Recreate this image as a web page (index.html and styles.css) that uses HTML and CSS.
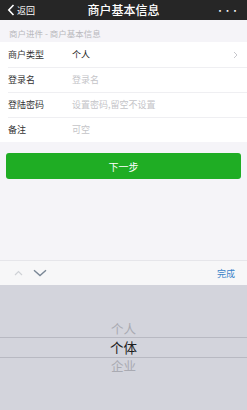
FILE: index.html
```html
<!DOCTYPE html>
<html lang="zh-CN">
<head>
    <meta charset="UTF-8">
    <meta name="viewport" content="width=device-width, initial-scale=1.0">
    <title>商户基本信息</title>
    <link rel="stylesheet" href="styles.css">
</head>
<body>
    <div class="navbar">
        <div class="nav-back">
            <svg width="8" height="12" viewBox="0 0 8 12"><path d="M6.5 1 L1.8 6 L6.5 11" fill="none" stroke="#fff" stroke-width="1.6"/></svg>
            <span>返回</span>
        </div>
        <div class="nav-title">商户基本信息</div>
        <div class="nav-more">•••</div>
    </div>

    <div class="crumb">商户进件 - 商户基本信息</div>

    <div class="form">
        <div class="row">
            <div class="label">商户类型</div>
            <div class="value">个人</div>
            <svg class="arrow" width="5" height="8" viewBox="0 0 5 8"><path d="M1 1 L4 4 L1 7" fill="none" stroke="#c7c7cc" stroke-width="1"/></svg>
        </div>
        <div class="row">
            <div class="label">登录名</div>
            <div class="value holder">登录名</div>
        </div>
        <div class="row">
            <div class="label">登陆密码</div>
            <div class="value holder">设置密码,留空不设置</div>
        </div>
        <div class="row">
            <div class="label">备注</div>
            <div class="value holder">可空</div>
        </div>
    </div>

    <div class="btn-wrap">
        <div class="btn">下一步</div>
    </div>

    <div class="spacer"></div>

    <div class="toolbar">
        <div class="tb-arrows">
            <svg width="9" height="6" viewBox="0 0 9 6"><path d="M1 5 L4.5 1.5 L8 5" fill="none" stroke="#cfd2d6" stroke-width="1.2"/></svg>
            <svg width="14" height="8" viewBox="0 0 14 8"><path d="M1 1.2 L7 6.5 L13 1.2" fill="none" stroke="#7a8796" stroke-width="1.4"/></svg>
        </div>
        <div class="tb-done">完成</div>
    </div>

    <div class="picker">
        <div class="opt">个人</div>
        <div class="opt selected">个体</div>
        <div class="opt">企业</div>
    </div>
</body>
</html>
```

FILE: styles.css
```css
html, body{
    margin: 0;
    padding: 0;
}
body{
    width: 247px;
    height: 410px;
    display: flex;
    flex-direction: column;
    background-color: #f5f4f8;
    font-family: "Noto Sans CJK SC", "Liberation Sans", sans-serif;
    overflow: hidden;
}
.navbar{
    height: 20px;
    background-color: #262626;
    display: flex;
    align-items: center;
    justify-content: space-between;
    padding: 0 8px 0 7px;
    color: #fff;
    position: relative;
}
.nav-back{
    display: flex;
    align-items: center;
    gap: 2px;
    font-size: 9px;
}
.nav-title{
    position: absolute;
    left: 0;
    right: 0;
    text-align: center;
    font-size: 12px;
    font-weight: 500;
    line-height: 20px;
    pointer-events: none;
}
.nav-more{
    font-size: 7px;
    font-weight: bold;
    letter-spacing: 0.5px;
}
.crumb{
    height: 22px;
    line-height: 26px;
    padding-left: 9px;
    font-size: 8.5px;
    color: #b9b9bd;
}
.form{
    background-color: #fff;
}
.row{
    height: 25px;
    display: flex;
    align-items: center;
    padding: 0 9px 0 8px;
    position: relative;
    font-size: 9px;
}
.row + .row::before{
    content: "";
    position: absolute;
    top: 0;
    left: 8px;
    right: 0;
    border-top: 1px solid #efeff2;
}
.label{
    width: 64px;
    color: #333;
}
.value{
    flex: 1;
    color: #222;
}
.holder{
    color: #c4c4c8;
}
.btn-wrap{
    padding: 11px 6px 0 6px;
}
.btn{
    height: 26px;
    border-radius: 3px;
    background-color: #1fad24;
    color: #fff;
    font-size: 10px;
    display: flex;
    align-items: center;
    justify-content: center;
}
.spacer{
    flex: 1;
}
.toolbar{
    height: 24px;
    background-color: #f7f7f8;
    border-top: 1px solid #e6e6ea;
    display: flex;
    align-items: center;
    justify-content: space-between;
    padding: 0 12px 0 14px;
}
.tb-arrows{
    display: flex;
    align-items: center;
    gap: 10px;
}
.tb-done{
    font-size: 9px;
    color: #3b84c8;
}
.picker{
    height: 125px;
    background-color: #d3d4dc;
    display: flex;
    flex-direction: column;
    align-items: center;
    justify-content: center;
}
.opt{
    font-size: 12.5px;
    line-height: 16px;
    color: #a9aab2;
}
.selected{
    width: 100%;
    text-align: center;
    color: #1e1e1e;
    font-size: 13.5px;
    line-height: 19px;
    border-top: 1px solid #b8b9c2;
    border-bottom: 1px solid #b8b9c2;
}
```
